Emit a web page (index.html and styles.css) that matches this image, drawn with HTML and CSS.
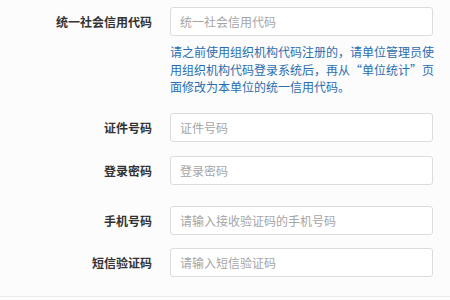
FILE: index.html
```html
<!DOCTYPE html>
<html lang="zh-CN">
<head>
<meta charset="utf-8">
<link rel="stylesheet" href="styles.css">
</head>
<body>
<form class="form">
  <div class="row">
    <label class="label">统一社会信用代码</label>
    <div class="field">
      <input class="input" placeholder="统一社会信用代码">
      <p class="help">请之前使用组织机构代码注册的，请单位管理员使用组织机构代码登录系统后，再从“单位统计”页面修改为本单位的统一信用代码。</p>
    </div>
  </div>
  <div class="row row-cert">
    <label class="label">证件号码</label>
    <div class="field"><input class="input" placeholder="证件号码"></div>
  </div>
  <div class="row">
    <label class="label">登录密码</label>
    <div class="field"><input class="input" placeholder="登录密码"></div>
  </div>
  <div class="row row-phone">
    <label class="label">手机号码</label>
    <div class="field"><input class="input" placeholder="请输入接收验证码的手机号码"></div>
  </div>
  <div class="row">
    <label class="label">短信验证码</label>
    <div class="field"><input class="input" placeholder="请输入短信验证码"></div>
  </div>
</form>
<div class="divider"></div>
</body>
</html>
```
FILE: styles.css
```css
html, body {
  margin: 0;
  padding: 0;
  background: #fcfcfc;
  font-family: "Noto Sans CJK SC", "Noto Sans", sans-serif;
}
.form {
  display: flex;
  flex-direction: column;
  padding-top: 7px;
  height: 296px;
  box-sizing: border-box;
}
.row {
  display: grid;
  grid-template-columns: 152px 263px;
  column-gap: 18px;
  margin-bottom: 14px;
}
.row-cert { margin-top: 3px; }
.row-phone { margin-top: 7px; margin-bottom: 13px; }
.label {
  height: 29px;
  line-height: 29px;
  text-align: right;
  font-size: 12px;
  font-weight: 700;
  color: #333;
  white-space: nowrap;
}
.input {
  display: block;
  width: 263px;
  height: 29px;
  box-sizing: border-box;
  margin: 0;
  padding: 0 9px;
  border: 1px solid #dcdcdc;
  border-radius: 3px;
  background: #fff;
  font-family: inherit;
  font-size: 12px;
  color: #333;
  outline: none;
}
.input::placeholder {
  color: #a5a5a5;
}
.help {
  margin: 7px 0 0;
  width: 266px;
  font-size: 12px;
  line-height: 17.5px;
  color: #2b6cae;
}
.divider {
  height: 1px;
  background: #ececec;
}
```
